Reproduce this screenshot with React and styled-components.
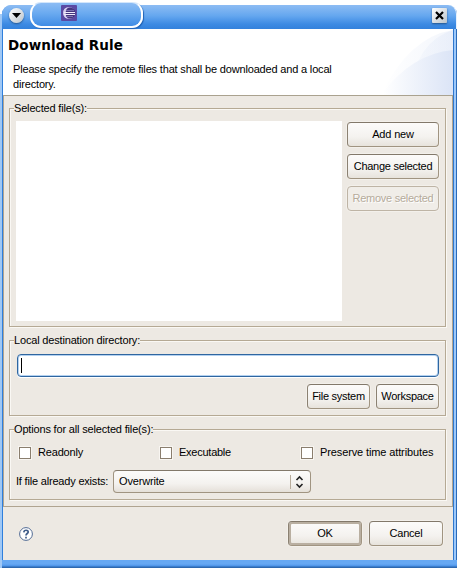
import React from "react";
import styled, { createGlobalStyle, css } from "styled-components";

const Global = createGlobalStyle`
  * { box-sizing: border-box; }
  html, body { margin: 0; background: #fff; }
  body { font: 11px/15px "Liberation Sans", Arial, sans-serif; letter-spacing: -0.17px; color: #000; }
`;

const Window = styled.div`
  width: 457px;
  height: 568px;
  padding-top: 2px;
  overflow: hidden;
  position: relative;
`;

const Frame = styled.div`
  margin-top: 3px;
  height: 563px;
  margin-left: 2px;
  border-radius: 9px 9px 0 0;
  background: linear-gradient(90deg, #2f7fdc 0 1px, transparent 1px 451px, #2f78cf 451px 452px, #9cc8fa 452px 454px, #2a6ab8 454px),
    linear-gradient(#8fbff5, #2f80dc 24px, #2f80dc);
  display: flex;
  flex-direction: column;
`;

const LeftEdge = styled.div`
  position: absolute;
  left: 0;
  top: 14px;
  width: 2px;
  height: 554px;
  background: #a0c8f5;
`;

const TitleBar = styled.header`
  height: 24px;
  flex: none;
  display: flex;
  padding: 0 9px 0 7px;
  justify-content: space-between;
  align-items: flex-start;
  border-radius: 9px 9px 0 0;
  border-right: 1px solid #e6f1fd;
  background: linear-gradient(#8dbcf3, #65a7ef 45%, #3c8ae3 80%, #3381dc);
`;

const RoundButton = styled.span`
  width: 15px;
  height: 15px;
  margin-top: 3px;
  border-radius: 50%;
  background: linear-gradient(135deg, #fff, #bbc4cb);
  box-shadow: 0 1px 2px #24568f;
  display: grid;
  place-items: center;
`;

const CloseButton = styled(RoundButton)`
  border-radius: 1px;
`;

const Tab = styled.div`
  position: absolute;
  left: 30px;
  top: 2px;
  width: 113px;
  height: 26px;
  border: 2px solid #fff;
  border-top: 1px solid #d3e6fb;
  border-radius: 11px;
  background: linear-gradient(#8cbcf4, #6aaaf0 45%, #3f8ce5);
  box-shadow: 1px 1px 1px #1f62b5;

  svg { display: block; margin: 2px 0 0 29px; }
`;

const Content = styled.main`
  height: 531px;
  flex: none;
  margin: 0 4px 0 1px;
  background: #ede9e3;
`;

const Banner = styled.section`
  height: 66px;
  position: relative;
  background: #fff;
  padding: 8px 0 0 5px;
`;

const Swoosh = styled.svg`
  position: absolute;
  right: 0;
  top: 0;
`;

const Heading = styled.h1`
  margin: 0;
  font: bold 13.5px/17px "DejaVu Sans", sans-serif;
  letter-spacing: 0.1px;
`;

const Message = styled.p`
  position: relative;
  margin: 8px 0 0 5px;
  width: 325px;
`;

const Body = styled.section`
  height: 412px;
  border: 1px solid #b0a490;
  border-top: 1px solid #aaa28f;
  padding: 12px 6px 0 5px;
  display: flex;
  flex-direction: column;
`;

const Group = styled.section`
  height: ${({ $h }) => $h}px;
  margin-bottom: ${({ $gap }) => $gap || 0}px;
  flex: none;
  border: 1px solid #b5a994;
  box-shadow: 1px 1px 0 #faf8f4, inset 1px 1px 0 #faf8f4;
`;

const Legend = styled.div`
  height: 14px;
  line-height: 14px;
  width: fit-content;
  margin: -8px 0 0 4px;
  background: #ede9e3;
  white-space: nowrap;
`;

const FileArea = styled.div`
  display: flex;
  justify-content: space-between;
  padding: 6px 6px 0;
`;

const FileList = styled.div`
  width: 326px;
  height: 200px;
  background: #fff;
`;

const ButtonColumn = styled.div`
  display: flex;
  flex-direction: column;
  gap: 7px;
  padding-top: 1px;
`;

const Button = styled.button`
  width: ${({ $w }) => $w}px;
  height: 25px;
  padding: 0;
  border: 1px solid #a09481;
  border-top-color: #82786a;
  border-left-color: #8b8172;
  border-radius: 4px;
  background: linear-gradient(#fcfbfa, #f4f2ef 60%, #e7e3dc);
  box-shadow: 0 0 0 1px #f3f0eb;
  color: #000;
  font: inherit;
  letter-spacing: ${({ $track }) => $track ?? -0.27}px;
  white-space: nowrap;

  &:disabled {
    color: #b5ab9b;
    text-shadow: 1px 1px #fff;
    border-color: #beb4a5;
    background: #f0ede8;
  }

  ${({ $primary }) => $primary && css`
    box-shadow: inset 0 0 0 2px #b9afa1, 0 0 0 1px #f3f0eb;
  `}
`;

const PathInput = styled.div`
  height: 23px;
  margin: 7px 6px 0 7px;
  border: 1px solid #2f66a0;
  border-radius: 4px;
  background: #fff;
  box-shadow: inset 0 0 0 1px #b3d1f0, 0 1px 0 #fff;
  padding: 3px 0 0 3px;
`;

const Caret = styled.span`
  display: block;
  width: 1px;
  height: 15px;
  background: #000;
`;

const ActionRow = styled.div`
  display: flex;
  justify-content: flex-end;
  gap: 6px;
  padding: 7px 6px 0 0;
`;

const Checks = styled.div`
  display: grid;
  grid-template-columns: 141px 141px 1fr;
  padding: 9px 0 0 9px;
  height: 24px;
`;

const Check = styled.label`
  display: flex;
  gap: 7px;
  white-space: nowrap;
  letter-spacing: ${({ $track }) => $track}px;
`;

const Box = styled.span`
  width: 12px;
  height: 12px;
  flex: none;
  margin-top: 2px;
  border: 1px solid #8a7e6e;
  background: #fff;
  box-shadow: 0 0 0 1px #f8f5f1;
`;

const ExistsRow = styled.div`
  display: flex;
  align-items: center;
  padding: 10px 0 0 6px;
`;

const FieldLabel = styled.span`
  width: 97px;
  white-space: nowrap;
  letter-spacing: -0.19px;
`;

const Select = styled.div`
  width: 198px;
  height: 23px;
  border: 1px solid #a09481;
  border-top-color: #82786a;
  border-radius: 4px;
  background: linear-gradient(#fcfbfa, #f4f2ef 60%, #e5e0d9);
  display: flex;
  align-items: center;
  justify-content: space-between;
  padding: 0 6px 0 5px;
`;

const Spinner = styled.span`
  height: 14px;
  padding-left: 4px;
  border-left: 1px solid #b8ac9b;
  display: flex;
`;

const Footer = styled.footer`
  height: 53px;
  display: flex;
  align-items: center;
  padding: 0 10px 0 16px;
`;

const FooterActions = styled.div`
  display: flex;
  gap: 7px;
  margin-left: auto;
`;

const BottomEdge = styled.div`
  height: 8px;
  flex: none;
  background: linear-gradient(#66a8f3 0 4px, #4b93e8 6px, #2d68b0 7px);
`;

const EclipseIcon = () => (
  <svg width="16" height="16">
    <rect width="16" height="16" rx="1" fill="#5a49a3" />
    <circle cx="8" cy="8" r="6" fill="#b9afe0" />
    <circle cx="9" cy="8" r="5.5" fill="#45367f" />
    <path d="M7 2.3a5.8 5.8 0 0 0 0 11.4A8 8 0 0 1 4.6 8 8 8 0 0 1 7 2.3z" fill="#d6cfee" />
    <path d="M5 5.5h8M5 11.5h7" stroke="#7b6fb2" />
    <path d="M3 7.5h11M3 9.5h11" stroke="#efebfb" />
  </svg>
);

const CheckItem = ({ children, track = -0.17 }) => <Check $track={track}><Box />{children}</Check>;

export default function App() {
  return (
    <>
      <Global />
      <Window>
        <LeftEdge />
        <Frame>
          <TitleBar>
            <RoundButton><svg width="11" height="7"><path d="M1 1h9L5.5 6z" /></svg></RoundButton>
            <CloseButton><svg width="9" height="9"><path d="M1 1l7 7M8 1L1 8" stroke="#000" strokeWidth="2.2" /></svg></CloseButton>
          </TitleBar>
          <Content>
            <Banner>
              <Swoosh width="76" height="66">
                <defs>
                  <linearGradient id="fade" gradientUnits="userSpaceOnUse" x1="6" x2="76" y1="0" y2="0">
                    <stop stopColor="#fff" />
                    <stop offset="1" stopColor="#dbe4f6" />
                  </linearGradient>
                </defs>
                <path d="M4 66Q32 8 76 1V66z" fill="url(#fade)" opacity=".35" />
                <path d="M32 66Q39 12 76 1V66z" fill="url(#fade)" opacity=".4" />
                <path d="M4 66Q34 25 76 21V66z" fill="url(#fade)" />
              </Swoosh>
              <Heading>Download Rule</Heading>
              <Message>Please specify the remote files that shall be downloaded and a local<br />directory.</Message>
            </Banner>
            <Body>
              <Group $h={219} $gap={13}>
                <Legend>Selected file(s):</Legend>
                <FileArea>
                  <FileList />
                  <ButtonColumn>
                    <Button $w={92} $track={-0.17}>Add new</Button>
                    <Button $w={92}>Change selected</Button>
                    <Button $w={92} disabled>Remove selected</Button>
                  </ButtonColumn>
                </FileArea>
              </Group>
              <Group $h={76} $gap={13}>
                <Legend>Local destination directory:</Legend>
                <PathInput><Caret /></PathInput>
                <ActionRow><Button $w={63}>File system</Button><Button $w={63}>Workspace</Button></ActionRow>
              </Group>
              <Group $h={71}>
                <Legend>Options for all selected file(s):</Legend>
                <Checks>
                  <CheckItem>Readonly</CheckItem>
                  <CheckItem track={-0.25}>Executable</CheckItem>
                  <CheckItem track={-0.12}>Preserve time attributes</CheckItem>
                </Checks>
                <ExistsRow>
                  <FieldLabel>If file already exists:</FieldLabel>
                  <Select>Overwrite<Spinner><svg width="9" height="14"><path d="M1.5 5l3-3 3 3M1.5 9l3 3 3-3" fill="none" stroke="#222" strokeWidth="1.6" /></svg></Spinner></Select>
                </ExistsRow>
              </Group>
            </Body>
            <Footer>
              <svg width="14" height="14"><circle cx="7" cy="7" r="6.4" fill="#fff" stroke="#526b94" /><path d="M4.8 5.4C5 2.5 9.4 2.7 9.2 5.1 9 6.6 7 6.5 7 8.6M7 9.8v1.6" fill="none" stroke="#405d8a" strokeWidth="1.7" /></svg>
              <FooterActions><Button $w={74} $primary>OK</Button><Button $w={74} $track={-0.2}>Cancel</Button></FooterActions>
            </Footer>
          </Content>
          <BottomEdge />
        </Frame>
        <Tab><EclipseIcon /></Tab>
      </Window>
    </>
  );
}
